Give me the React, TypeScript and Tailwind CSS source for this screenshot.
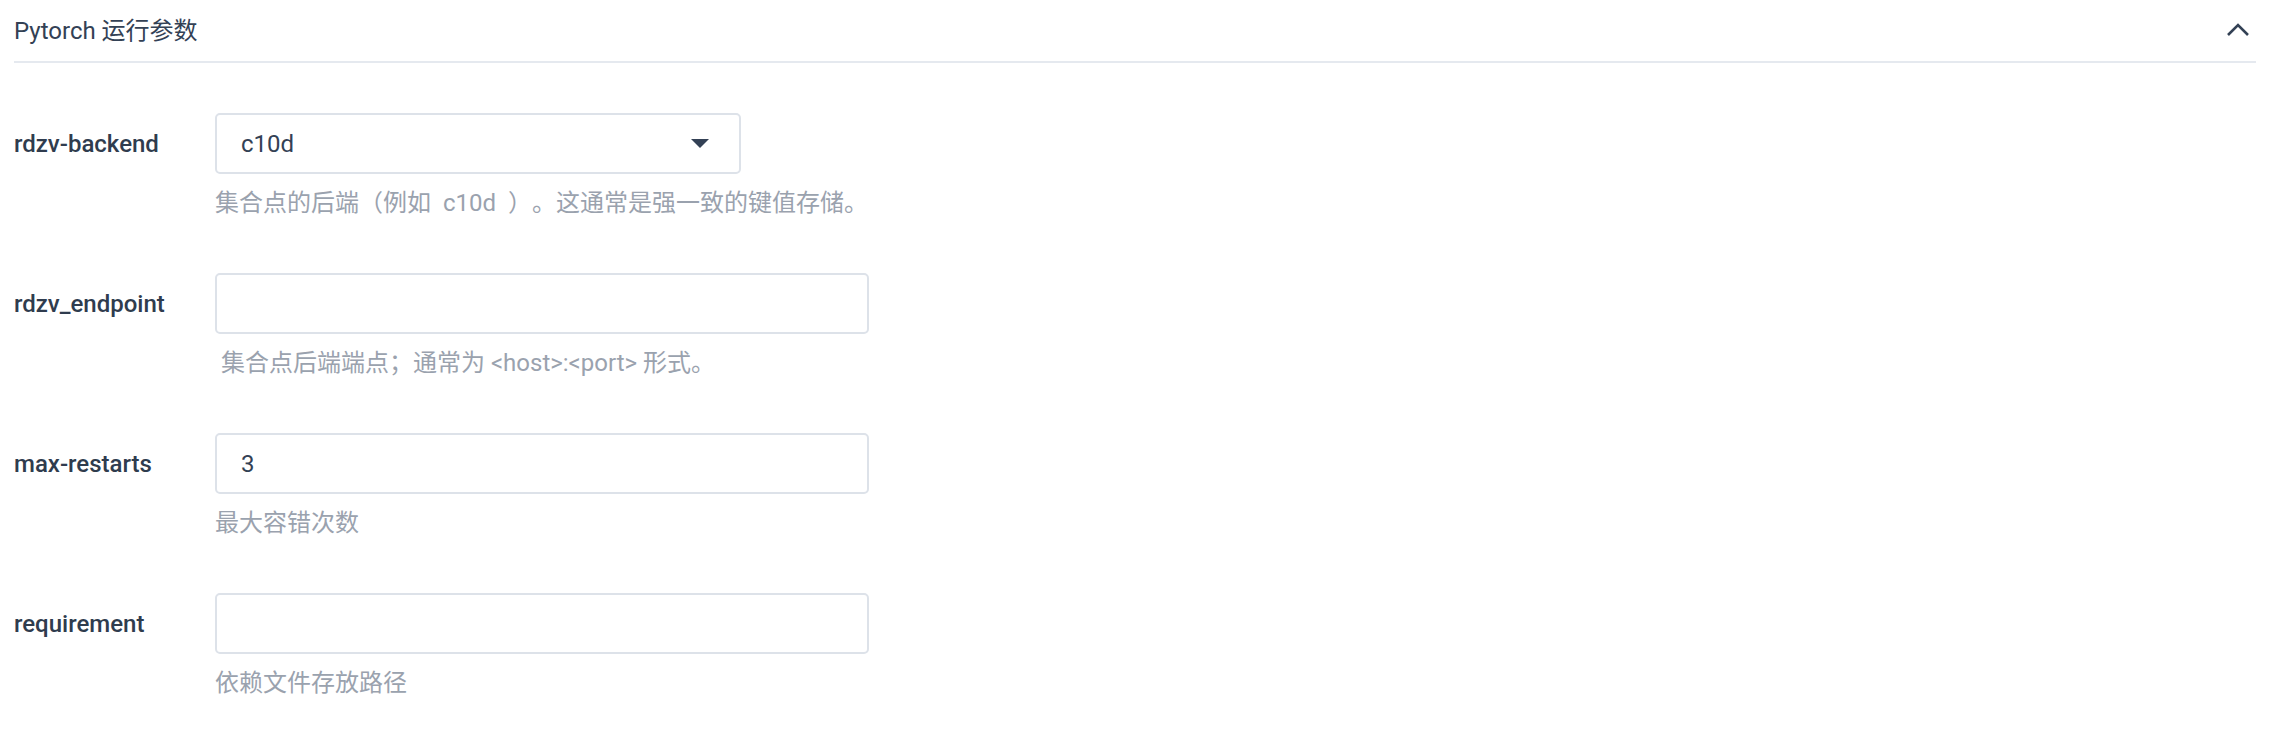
import React from "react";

const font = { fontFamily: 'Roboto, "Noto Sans CJK SC", sans-serif' };

function Row({
  label,
  help,
  helpClass = "",
  children,
}: {
  label: string;
  help: string;
  helpClass?: string;
  children: React.ReactNode;
}) {
  return (
    <div className="flex items-start">
      <div className="w-[201px] h-[61px] flex items-center text-[24px] font-medium text-[#2f3c4e] shrink-0">
        {label}
      </div>
      <div className="flex flex-col">
        {children}
        <div
          className={`mt-[11px] leading-[36px] text-[24px] text-[#9aa2ae] whitespace-pre [text-spacing-trim:space-all] ${helpClass}`}
        >
          {help}
        </div>
      </div>
    </div>
  );
}

function TextInput({ value = "" }: { value?: string }) {
  return (
    <div className="w-[654px] h-[61px] border-2 border-[#dde2e9] rounded-[5px] flex items-center px-[24px] text-[24px] text-[#334155]">
      {value}
    </div>
  );
}

export default function App() {
  return (
    <div className="bg-white w-[2294px] h-[742px] pl-[14px] pr-[38px]" style={font}>
      <div className="h-[63px] border-b-2 border-[#e5e9ef] flex items-center justify-between">
        <div className="text-[24px] text-[#334155] leading-none">Pytorch 运行参数</div>
        <svg width="24" height="14" viewBox="0 0 24 14" className="mr-[6px] mt-[-2px]">
          <path d="M2 12 L12 2 L22 12" fill="none" stroke="#334155" strokeWidth="2.6" />
        </svg>
      </div>
      <div className="pt-[50px] flex flex-col gap-[52px]">
        <Row
          label="rdzv-backend"
          help="集合点的后端（例如 c10d ）。这通常是强一致的键值存储。"
          helpClass="[word-spacing:6px]"
        >
          <div className="w-[526px] h-[61px] border-2 border-[#dde2e9] rounded-[5px] flex items-center justify-between pl-[24px] pr-[30px] text-[24px] text-[#334155]">
            <span>c10d</span>
            <svg width="18" height="9" viewBox="0 0 18 9">
              <path d="M0 0 L18 0 L9 9 Z" fill="#334155" />
            </svg>
          </div>
        </Row>
        <Row label="rdzv_endpoint" help=" 集合点后端端点；通常为 <host>:<port> 形式。">
          <TextInput />
        </Row>
        <Row label="max-restarts" help="最大容错次数">
          <TextInput value="3" />
        </Row>
        <Row label="requirement" help="依赖文件存放路径">
          <TextInput />
        </Row>
      </div>
    </div>
  );
}
